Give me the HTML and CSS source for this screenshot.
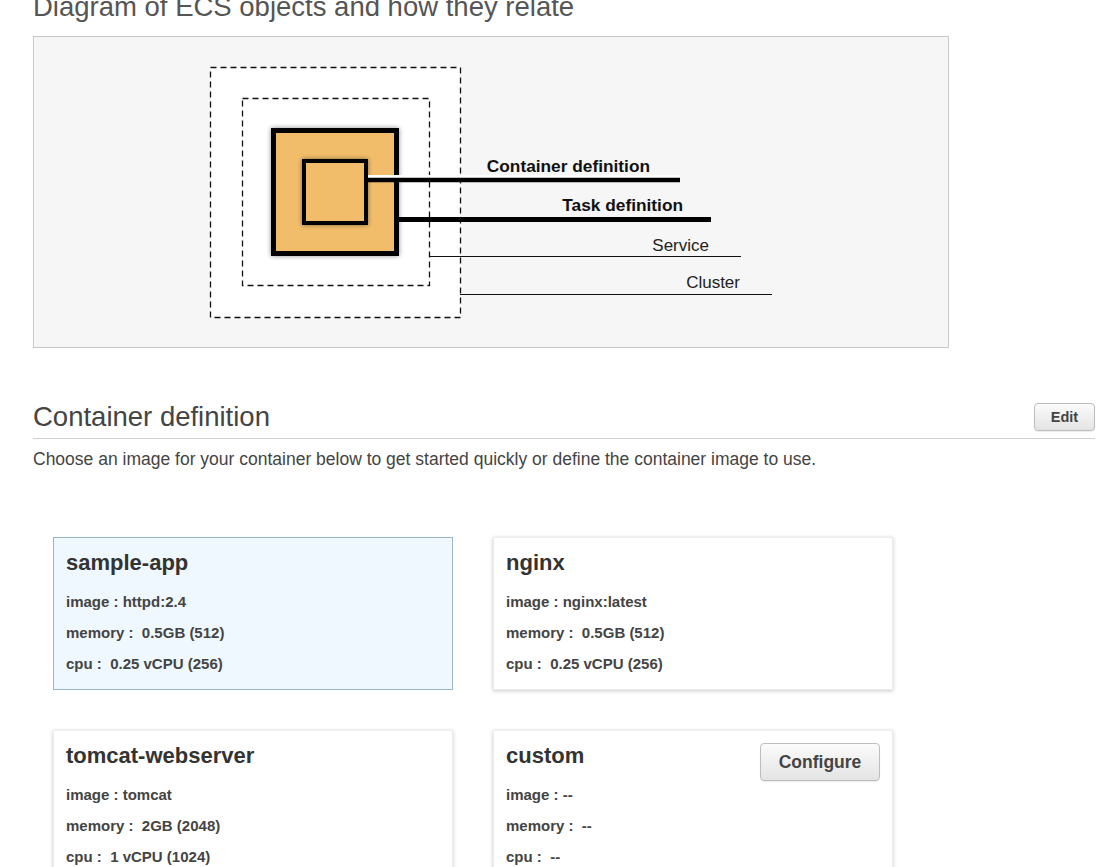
FILE: index.html
```html
<!DOCTYPE html>
<html lang="en">
<head>
<meta charset="utf-8">
<title>ECS container definition</title>
<link rel="stylesheet" href="styles.css">
</head>
<body>
<main class="page">
  <h1 class="page-title">Diagram of ECS objects and how they relate</h1>
  <div class="diagram">
    <svg class="diagram-svg" width="914" height="310" viewBox="0 0 914 310" xmlns="http://www.w3.org/2000/svg">
      <defs>
        <filter id="glow" x="-20%" y="-20%" width="140%" height="140%">
          <feGaussianBlur in="SourceAlpha" stdDeviation="2.5"/>
          <feComponentTransfer><feFuncA type="linear" slope="0.45"/></feComponentTransfer>
          <feMerge><feMergeNode/><feMergeNode in="SourceGraphic"/></feMerge>
        </filter>
      </defs>
      <rect x="176.5" y="30.5" width="250" height="250" fill="#ffffff" stroke="#111" stroke-width="1.3" stroke-dasharray="6 4"/>
      <rect x="208.5" y="61.5" width="187" height="187" fill="#ffffff" stroke="#111" stroke-width="1.3" stroke-dasharray="6 4"/>
      <line x1="395" y1="219.5" x2="707" y2="219.5" stroke="#111" stroke-width="1.2"/>
      <line x1="426" y1="257.5" x2="738" y2="257.5" stroke="#111" stroke-width="1.2"/>
      <g filter="url(#glow)">
        <rect x="239.5" y="93.5" width="123" height="123" fill="#f1bd6b" stroke="#000" stroke-width="5"/>
      </g>
      <g filter="url(#glow)">
        <rect x="270" y="124" width="62" height="62" fill="#f1bd6b" stroke="#000" stroke-width="4"/>
      </g>
      <line x1="334" y1="139.5" x2="646" y2="139.5" stroke="#ffffff" stroke-width="3"/>
      <line x1="334" y1="143" x2="646" y2="143" stroke="#000" stroke-width="4.5"/>
      <line x1="365" y1="182.5" x2="677" y2="182.5" stroke="#000" stroke-width="5"/>
      <text class="lbl-strong" x="616" y="135" text-anchor="end">Container definition</text>
      <text class="lbl-strong" x="649" y="174" text-anchor="end">Task definition</text>
      <text class="lbl" x="675" y="214" text-anchor="end">Service</text>
      <text class="lbl" x="706" y="251" text-anchor="end">Cluster</text>
    </svg>
  </div>

  <div class="section-head">
    <h2 class="section-title">Container definition</h2>
    <button class="btn btn-edit" type="button">Edit</button>
  </div>
  <p class="section-desc">Choose an image for your container below to get started quickly or define the container image to use.</p>

  <div class="cards">
    <div class="card card-selected">
      <div class="card-head"><h3 class="card-title">sample-app</h3></div>
      <p class="card-line">image : httpd:2.4</p>
      <p class="card-line">memory :&nbsp; 0.5GB (512)</p>
      <p class="card-line">cpu :&nbsp; 0.25 vCPU (256)</p>
    </div>
    <div class="card">
      <div class="card-head"><h3 class="card-title">nginx</h3></div>
      <p class="card-line">image : nginx:latest</p>
      <p class="card-line">memory :&nbsp; 0.5GB (512)</p>
      <p class="card-line">cpu :&nbsp; 0.25 vCPU (256)</p>
    </div>
    <div class="card">
      <div class="card-head"><h3 class="card-title">tomcat-webserver</h3></div>
      <p class="card-line">image : tomcat</p>
      <p class="card-line">memory :&nbsp; 2GB (2048)</p>
      <p class="card-line">cpu :&nbsp; 1 vCPU (1024)</p>
    </div>
    <div class="card">
      <div class="card-head">
        <h3 class="card-title">custom</h3>
        <button class="btn btn-configure" type="button">Configure</button>
      </div>
      <p class="card-line">image : --</p>
      <p class="card-line">memory :&nbsp; --</p>
      <p class="card-line">cpu :&nbsp; --</p>
    </div>
  </div>
</main>
</body>
</html>
```

FILE: styles.css
```css
html, body {
  margin: 0;
  padding: 0;
  background: #ffffff;
}

body {
  font-family: "Liberation Sans", Arial, sans-serif;
  color: #444;
  overflow: hidden;
}

.page {
  padding: 0 9px 40px 33px;
}

.page-title {
  margin: -9px 0 13px 0;
  font-size: 27.5px;
  line-height: 32px;
  font-weight: normal;
  color: #555;
}

.diagram {
  width: 914px;
  height: 310px;
  border: 1px solid #c8c8c8;
  background: #f6f6f6;
}

.diagram-svg {
  display: block;
}

.lbl-strong {
  font-family: "Liberation Sans", Arial, sans-serif;
  font-weight: bold;
  font-size: 17.3px;
  fill: #111;
}

.lbl {
  font-family: "Liberation Sans", Arial, sans-serif;
  font-size: 17px;
  fill: #222;
}

.section-head {
  margin-top: 53px;
  display: flex;
  align-items: center;
  justify-content: space-between;
  padding-bottom: 5px;
  border-bottom: 1px solid #cfcfcf;
}

.section-title {
  margin: 0;
  font-size: 27.5px;
  line-height: 32px;
  font-weight: normal;
  color: #444;
}

.section-desc {
  margin: 9px 0 0 0;
  font-size: 17.5px;
  line-height: 22px;
  color: #444;
}

.btn {
  font-family: "Liberation Sans", Arial, sans-serif;
  font-weight: bold;
  color: #444;
  background: linear-gradient(#fbfbfb, #e4e4e4);
  border: 1px solid #bdbdbd;
  border-radius: 4px;
  box-shadow: 0 1px 1px rgba(0, 0, 0, 0.08);
  padding: 0;
  cursor: pointer;
}

.btn-edit {
  width: 61px;
  height: 28px;
  font-size: 14.5px;
}

.btn-configure {
  flex: none;
  width: 120px;
  height: 38px;
  font-size: 17.5px;
}

.cards {
  margin-top: 67px;
  padding-left: 20px;
  display: grid;
  grid-template-columns: 400px 400px;
  column-gap: 40px;
  row-gap: 40px;
}

.card {
  box-sizing: border-box;
  height: 153px;
  padding: 12px 12px 10px 12px;
  background: #ffffff;
  border: 1px solid #ececec;
  box-shadow: 0 1px 4px rgba(0, 0, 0, 0.22);
}

.card-selected {
  background: #f0f8ff;
  border: 1px solid #97b6cb;
  box-shadow: none;
}

.card-head {
  display: flex;
  align-items: flex-start;
  justify-content: space-between;
  height: 26px;
  margin-bottom: 10px;
}

.card-title {
  margin: 0;
  font-size: 22px;
  line-height: 26px;
  font-weight: bold;
  color: #333;
}

.card-line {
  margin: 0;
  font-size: 15px;
  line-height: 31px;
  font-weight: bold;
  color: #444;
}
```
